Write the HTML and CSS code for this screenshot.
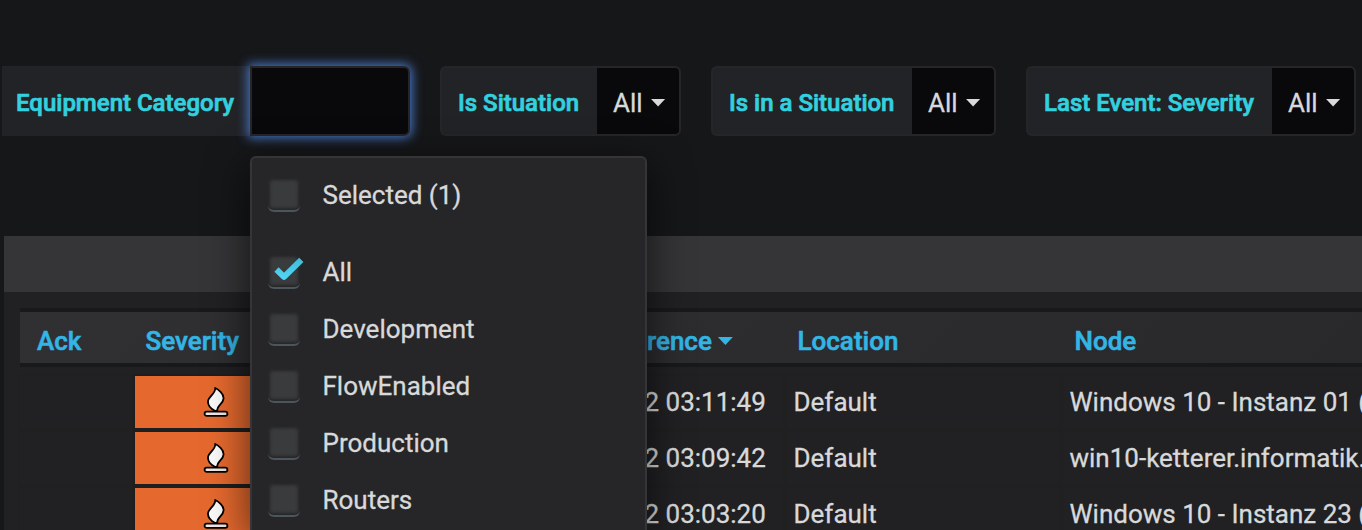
FILE: index.html
```html
<!DOCTYPE html>
<html lang="en">
<head>
<meta charset="utf-8">
<title>Alarms</title>
<link rel="stylesheet" href="styles.css">
</head>
<body>
<svg class="defs" aria-hidden="true">
  <symbol id="flame" viewBox="0 0 26 32">
    <path d="M12.3 25C8 23 4.8 19.6 5 15.4C5.3 10.4 13 7.6 12.2 2C15.2 3.4 20.8 7.6 20.6 12.4C20.4 17.6 13.6 19.6 14.2 25Z" fill="#fafafa" stroke="#000" stroke-width="1.8" stroke-linejoin="round"/>
    <rect x="1.6" y="25.6" width="22.8" height="4.2" rx="2.1" fill="#f2e8e6" stroke="#000" stroke-width="1.8"/>
  </symbol>
</svg>
<div class="filters">
  <div class="filter">
    <label class="label label-first">Equipment Category</label>
    <div class="anchor">
      <input class="search" type="text" aria-label="Equipment Category">
      <div class="menu">
        <div class="option option-head"><span class="box"></span><span>Selected (1)</span></div>
        <div class="option"><span class="box"><svg class="check" viewBox="0 0 36 30"><defs><linearGradient id="tick" x1="0" y1="0" x2="0" y2="1"><stop offset="0" stop-color="#40bfd8"/><stop offset="1" stop-color="#50d4f2"/></linearGradient></defs><path d="M6.5 14.5L14 21.8L31.3 4.8" fill="none" stroke="url(#tick)" stroke-width="6" stroke-linejoin="round"/></svg></span><span>All</span></div>
        <div class="option"><span class="box"></span><span>Development</span></div>
        <div class="option"><span class="box"></span><span>FlowEnabled</span></div>
        <div class="option"><span class="box"></span><span>Production</span></div>
        <div class="option"><span class="box"></span><span>Routers</span></div>
      </div>
    </div>
  </div>
  <div class="filter"><label class="label label-situation">Is Situation</label><div class="value">All<i class="caret"></i></div></div>
  <div class="filter"><label class="label label-in">Is in a Situation</label><div class="value">All<i class="caret"></i></div></div>
  <div class="filter"><label class="label label-severity">Last Event: Severity</label><div class="value">All<i class="caret"></i></div></div>
</div>
<div class="panel">
  <div class="panel-title"></div>
  <div class="table">
    <div class="row head"><div>Ack</div><div>Severity</div><div class="time">rence<i class="caret"></i></div><div>Location</div><div>Node</div></div>
    <div class="row"><div></div><div class="sev"><svg class="flame"><use href="#flame"/></svg></div><div class="time">2 03:11:49</div><div>Default</div><div>Windows 10 - Instanz 01 (</div></div>
    <div class="row"><div></div><div class="sev"><svg class="flame"><use href="#flame"/></svg></div><div class="time">2 03:09:42</div><div>Default</div><div>win10-ketterer.informatik.</div></div>
    <div class="row"><div></div><div class="sev"><svg class="flame"><use href="#flame"/></svg></div><div class="time">2 03:03:20</div><div>Default</div><div>Windows 10 - Instanz 23 (</div></div>
  </div>
</div>
</body>
</html>
```
FILE: styles.css
```css
* { box-sizing: border-box; }
body {
  margin: 0;
  height: 530px;
  overflow: hidden;
  background: #161719;
  color: #d8d9da;
  font: 400 26px/1.5 Roboto, sans-serif;
  -webkit-text-stroke: .3px currentColor;
}
.defs { position: absolute; width: 0; height: 0; }
.filters { display: flex; gap: 30px; padding: 66px 0 0 2px; height: 236px; }
.filter { display: flex; height: 70px; flex: none; }
.label {
  display: flex;
  align-items: center;
  padding: 3px 0 0 16px;
  border: 2px solid #262628;
  border-right: 0;
  border-radius: 6px 0 0 6px;
  background: #222327;
  color: #33d1df;
  font-size: 24px;
  font-weight: 500;
  white-space: nowrap;
  -webkit-text-stroke-width: .7px;
}
.label-first { width: 248px; padding-left: 14px; border-color: #222327; border-left: 0; border-radius: 0; }
.label-situation { width: 157px; }
.label-in { width: 201px; }
.label-severity { width: 246px; }
.anchor { position: relative; }
.search {
  display: block;
  width: 160px;
  height: 70px;
  border: 2px solid #262628;
  border-radius: 0 6px 6px 0;
  background: #09090b;
  box-shadow: 0 0 11px 2px #4877c8;
  outline: none;
}
.value {
  display: flex;
  align-items: center;
  gap: 8px;
  width: 84px;
  padding: 5px 0 0 16px;
  border: 2px solid #262628;
  border-left: 0;
  border-radius: 0 6px 6px 0;
  background: #09090b;
}
.caret {
  width: 15px;
  height: 8px;
  background: currentColor;
  clip-path: polygon(0 0, 100% 0, 50% 100%);
  margin-bottom: 2px;
}
.menu {
  position: absolute;
  z-index: 2;
  left: 0;
  top: 90px;
  width: 397px;
  height: 374px;
  padding: 9px 0 0 16px;
  border: 2px solid #353538;
  border-bottom: 0;
  border-radius: 6px 6px 0 0;
  background: #262628;
  box-shadow: 0 10px 40px 2px rgba(0, 0, 0, .6);
}
.option { display: flex; align-items: center; gap: 23px; height: 57px; }
.option-head { margin-bottom: 20px; }
.box {
  position: relative;
  width: 32px;
  height: 34px;
  margin-top: -2px;
  border-bottom: 2px solid #4a555c;
  border-radius: 6px;
  background: #3a3b3d;
  box-shadow: inset 0 0 3px 2px #262628;
}
.option > span:last-child { margin-left: -1px; padding-left: .5px; }
.check { position: absolute; left: 2px; top: 0; width: 36px; height: 30px; }
.panel { margin-left: 4px; height: 294px; background: #212124; }
.panel-title { height: 56px; background: #353537; }
.table { padding: 16px 0 0 16px; height: 238px; overflow: hidden; }
.row {
  display: grid;
  grid-template-columns: 111px 492px 152px 272px 299px;
  column-gap: 4px;
  height: 52px;
  margin-bottom: 4px;
  white-space: nowrap;
}
.row > div { padding: 7px 0 0 6.5px; box-shadow: 0 0 0 2px #202020; }
.row > .sev { padding: 10px 0 0 67.5px; background: #e5692e; box-shadow: 0 0 0 2px #1d1e20; }
.row > .time { padding-left: 13.5px; }
.flame { display: block; width: 26px; height: 32px; }
.head {
  height: 59px;
  margin-bottom: 9px;
  border: solid #18191b;
  border-width: 4px 0;
  background: linear-gradient(135deg, #303033, #29292b);
  color: #33b5e5;
  font-weight: 500;
  -webkit-text-stroke-width: .6px;
}
.row.head > div { padding: 10px 0 0 10.5px; box-shadow: none; }
.row.head > .time { display: flex; align-items: center; gap: 6px; padding: 7px 0 0 16px; }
.row.head > div:first-child { padding-left: 17px; }
.row.head > div:last-child { padding-left: 11.5px; }
.row.head .caret { margin-bottom: 0; }
```
